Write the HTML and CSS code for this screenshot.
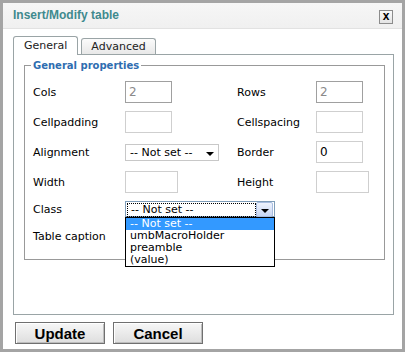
FILE: index.html
```html
<!DOCTYPE html>
<html lang="en">
<head>
    <meta charset="UTF-8">
    <title>Insert/Modify table</title>
    <link rel="stylesheet" href="styles.css">
</head>
<body>
    <div class="window">
        <div class="titlebar">
            <span class="title">Insert/Modify table</span>
            <span class="close">x</span>
        </div>
        <div class="content">
            <div class="tabs">
                <span class="tab active">General</span>
                <span class="tab">Advanced</span>
            </div>
            <div class="panel">
                <fieldset class="props">
                    <legend>General properties</legend>
                    <div class="form-grid">
                        <label>Cols</label>
                        <input type="text" class="field dim" value="2">
                        <label>Rows</label>
                        <input type="text" class="field dim" value="2">

                        <label>Cellpadding</label>
                        <input type="text" class="field">
                        <label>Cellspacing</label>
                        <input type="text" class="field">

                        <label>Alignment</label>
                        <div class="select plain">-- Not set --<span class="arrow"></span></div>
                        <label>Border</label>
                        <input type="text" class="field" value="0">

                        <label>Width</label>
                        <input type="text" class="field wide">
                        <label>Height</label>
                        <input type="text" class="field wide">

                        <label>Class</label>
                        <div class="select open">
                            <span class="focus">-- Not set --</span>
                            <span class="btn-arrow"><span class="arrow"></span></span>
                            <ul class="options">
                                <li class="selected">-- Not set --</li>
                                <li>umbMacroHolder</li>
                                <li>preamble</li>
                                <li>(value)</li>
                            </ul>
                        </div>

                        <label class="caption">Table caption</label>
                        <input type="checkbox" class="check">
                    </div>
                </fieldset>
            </div>
            <div class="buttons">
                <button>Update</button>
                <button>Cancel</button>
            </div>
        </div>
    </div>
</body>
</html>
```

FILE: styles.css
```css
body {
    margin: 0;
    padding: 0;
    font-family: "DejaVu Sans", Verdana, sans-serif;
    font-size: 11px;
    color: #000;
}
.window {
    width: 405px;
    height: 352px;
    box-sizing: border-box;
    border: 3px solid #a4a4a4;
    background: #fff;
}
.titlebar {
    height: 25px;
    border-bottom: 1px solid #e2e2e2;
    background: linear-gradient(#f6f6f6, #f0f0f0);
    display: flex;
    align-items: center;
    justify-content: space-between;
    padding: 0 9px 0 10px;
}
.title {
    font-family: "Liberation Sans", Arial, sans-serif;
    font-weight: bold;
    font-size: 12px;
    color: #3f8a8e;
    margin-top: -1px;
}
.close {
    width: 12px;
    height: 12px;
    border: 1px solid #8c8c8c;
    background: linear-gradient(#fafafa, #e4e4e4);
    font-family: "Liberation Sans", Arial, sans-serif;
    font-weight: bold;
    font-size: 12px;
    line-height: 10px;
    text-align: center;
    margin-top: 3px;
}
.content {
    padding: 8px 8px 0 10px;
}
.tabs {
    display: flex;
    align-items: flex-end;
    gap: 3px;
    height: 17px;
}
.tab {
    height: 15px;
    padding: 0 9px;
    border: 1px solid #9aa4a6;
    border-bottom: none;
    border-radius: 3px 3px 0 0;
    background: linear-gradient(#fbfbfb, #e8e8e8);
    line-height: 15px;
    color: #222;
}
.tab.active {
    height: 18px;
    padding: 0 10px;
    margin-bottom: -1px;
    background: #fff;
    line-height: 17px;
    position: relative;
}
.panel {
    height: 261px;
    box-sizing: border-box;
    border: 1px solid #9aa4a6;
    padding-top: 5px;
}
.props {
    margin: 0 8px 0 10px;
    padding: 10px 8px 10px 8px;
    border: 1px solid #999;
}
.props legend {
    padding: 0 2px;
    margin-left: -2px;
    font-weight: bold;
    font-size: 10px;
    color: #2e6db0;
}
.form-grid {
    display: grid;
    grid-template-columns: 92px 112px 79px auto;
    row-gap: 8px;
    align-items: center;
}
.field {
    width: 47px;
    height: 22px;
    box-sizing: border-box;
    border: 1px solid #cfcfcf;
    padding: 0 3px;
    font-family: "DejaVu Sans", Verdana, sans-serif;
    font-size: 12px;
    margin: 0;
}
.field.dim {
    border-color: #a0a0a0;
    color: #8a8a8a;
}
.field.wide {
    width: 53px;
}
.select {
    position: relative;
    height: 17px;
    box-sizing: border-box;
    border: 1px solid #c8c8c8;
    font-size: 11px;
    line-height: 15px;
    padding-left: 4px;
}
.select.plain {
    width: 94px;
}
.arrow {
    position: absolute;
    right: 4px;
    top: 7px;
    border-left: 4px solid transparent;
    border-right: 4px solid transparent;
    border-top: 4px solid #000;
}
.select.open {
    width: 150px;
    height: 16px;
    padding: 1px;
    border-color: #7f9db9;
    grid-column: 2 / 5;
    z-index: 2;
}
.focus {
    display: block;
    width: 124px;
    height: 12px;
    border: 1px dotted #000;
    padding-left: 3px;
    line-height: 12px;
}
.btn-arrow {
    position: absolute;
    right: 1px;
    top: 0;
    width: 15px;
    height: 13px;
    border: 1px solid #a8bde0;
    border-radius: 2px;
    background: linear-gradient(#eef3fd, #c8d6f3);
}
.btn-arrow .arrow {
    right: 3px;
    top: 6px;
}
.options {
    position: absolute;
    left: -1px;
    top: 15px;
    width: 150px;
    margin: 0;
    padding: 0;
    list-style: none;
    background: #fff;
    border: 1px solid #000;
    box-sizing: border-box;
}
.options li {
    height: 12px;
    line-height: 12px;
    padding-left: 4px;
}
.options li.selected {
    background: #3399ff;
    color: #fff;
}
.caption {
    line-height: 24px;
}
.check {
    margin: 0;
    width: 13px;
    height: 13px;
}
.buttons {
    display: flex;
    gap: 8px;
    margin-top: 7px;
    padding-left: 2px;
}
.buttons button {
    width: 90px;
    height: 22px;
    border: 1px solid #707070;
    box-shadow: inset 1px 1px 0 #fff, inset -1px -1px 0 #bdbdbd;
    background: linear-gradient(#f7f7f7, #dedede);
    font-family: "Liberation Sans", Arial, sans-serif;
    font-weight: bold;
    font-size: 15px;
    color: #000;
    padding: 0;
}
```
